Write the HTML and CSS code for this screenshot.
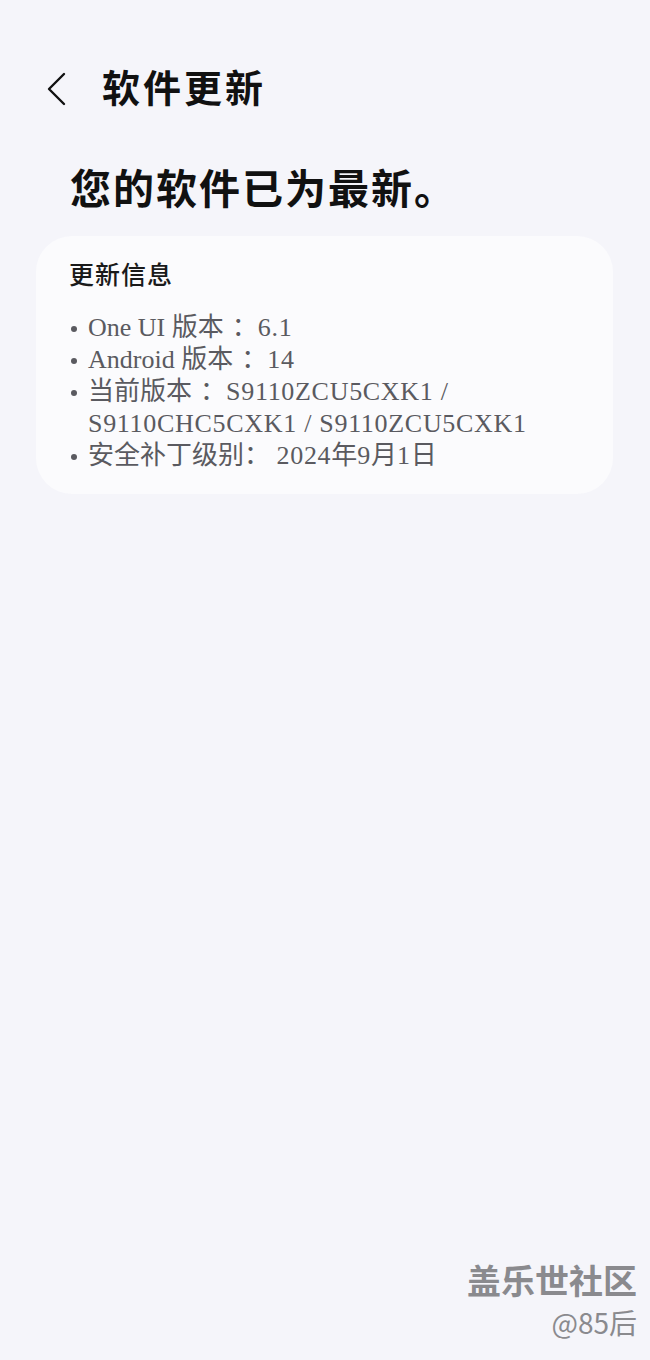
FILE: index.html
```html
<!DOCTYPE html>
<html lang="zh-CN">
<head>
    <meta charset="UTF-8">
    <meta name="viewport" content="width=device-width, initial-scale=1.0">
    <title>软件更新</title>
    <link rel="stylesheet" href="styles.css">
</head>
<body>
    <div class="page">
        <div class="top-bar">
            <span class="back">
                <svg width="24" height="34" viewBox="0 0 24 34">
                    <path d="M20 2 L5 17 L20 32" fill="none" stroke="#111" stroke-width="2.4" stroke-linecap="round" stroke-linejoin="round"/>
                </svg>
            </span>
            <h1 class="title">软件更新</h1>
        </div>

        <h2 class="status">您的软件已为最新。</h2>

        <div class="card">
            <h3 class="card-title">更新信息</h3>
            <ul class="info">
                <li>One UI 版本<span class="colon">：</span><span class="code">6.1</span></li>
                <li>Android 版本<span class="colon">：</span><span class="code">14</span></li>
                <li>当前版本<span class="colon">：</span><span class="code">S9110ZCU5CXK1 /</span> <span class="code nowrap">S9110CHC5CXK1 / S9110ZCU5CXK1</span></li>
                <li>安全补丁级别： <span class="code">2024</span>年<span class="code">9</span>月<span class="code">1</span>日</li>
            </ul>
        </div>

        <div class="watermark">
            <div class="wm-name">盖乐世社区</div>
            <div class="wm-user">@85后</div>
        </div>
    </div>
</body>
</html>
```

FILE: styles.css
```css
body {
    margin: 0;
    padding: 0;
    background-color: #f5f5fa;
    font-family: "Liberation Serif", "Noto Sans CJK SC", serif;
    color: #111;
}

.page {
    position: relative;
    width: 650px;
    height: 1360px;
    overflow: hidden;
}

.top-bar {
    display: flex;
    align-items: center;
    padding: 70px 0 0 44px;
    height: 38px;
}

.back {
    display: flex;
    width: 24px;
    margin-right: 34px;
}

.title {
    margin: 0;
    font-size: 38px;
    font-weight: 700;
    line-height: 38px;
    letter-spacing: 3px;
}

.status {
    margin: 60px 0 0 70px;
    font-size: 41px;
    font-weight: 700;
    line-height: 44px;
    letter-spacing: 2px;
}

.card {
    margin: 24px 37px 0 36px;
    background-color: #fbfbfd;
    border-radius: 36px;
    padding: 26px 30px 22px 33px;
}

.card-title {
    margin: 0;
    font-size: 25px;
    font-weight: 500;
    line-height: 28px;
    letter-spacing: 1px;
    color: #1a1a1a;
}

.info {
    list-style: none;
    margin: 22px 0 0 0;
    padding: 0;
    color: #5a5a60;
    font-size: 26px;
    line-height: 32px;
}

.info li {
    position: relative;
    padding-left: 19px;
}

.info li::before {
    content: "";
    position: absolute;
    left: 2px;
    top: 14px;
    width: 6px;
    height: 6px;
    border-radius: 50%;
    background-color: #5a5a60;
}

.colon {
    padding-left: 8px;
}

.code {
    letter-spacing: 0.7px;
}

.nowrap {
    white-space: nowrap;
}

.watermark {
    position: absolute;
    right: 13px;
    bottom: 18px;
    text-align: right;
    font-family: "Noto Sans CJK SC", sans-serif;
    color: #8a8a8e;
}

.wm-name {
    font-size: 34px;
    font-weight: 700;
    line-height: 44px;
}

.wm-user {
    font-size: 28px;
    line-height: 40px;
}
```
